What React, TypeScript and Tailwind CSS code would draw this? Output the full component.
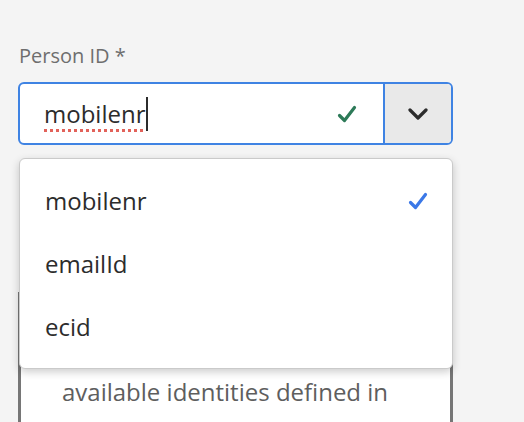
import React from "react";

const font = { fontFamily: '"Open Sans", "Noto Sans", sans-serif' };

const CheckIcon = ({ className }: { className?: string }) => (
  <svg viewBox="0 0 20 18" className={className} fill="none">
    <path d="M2.5 10.5 L7.5 15.5 L17.5 2.5" stroke="currentColor" strokeWidth="3.2" strokeLinecap="round" strokeLinejoin="round" />
  </svg>
);

const ChevronDown = ({ className }: { className?: string }) => (
  <svg viewBox="0 0 20 12" className={className} fill="none">
    <path d="M2 2 L10 10 L18 2" stroke="currentColor" strokeWidth="3.2" strokeLinecap="round" strokeLinejoin="round" />
  </svg>
);

const options = ["mobilenr", "emailId", "ecid"];

export default function App() {
  return (
    <div className="h-[422px] w-full overflow-hidden bg-[#f4f4f4] pl-[18px] pr-[71px]" style={font}>
      {/* label */}
      <div className="pt-[43px] pl-[1px] text-[20px] leading-[26px] text-[#6e6e6e]">Person ID *</div>

      {/* combobox */}
      <div className="relative mt-[13px] z-10">
        <div className="flex h-[63px] rounded-[6px] border-2 border-[#3f83e3] bg-white overflow-hidden">
          <div className="flex flex-1 items-center pl-[24px] pr-[26px]">
            <span className="text-[24px] text-[#2c2c2c] underline decoration-dotted decoration-[#e2625a] decoration-[3px] underline-offset-[6px]">
              mobilenr
            </span>
            <span className="ml-[1px] inline-block h-[34px] w-[2px] bg-[#2c2c2c]" />
            <CheckIcon className="ml-auto h-[18px] w-[20px] text-[#2d7a58]" />
          </div>
          <div className="flex w-[68px] items-center justify-center border-l-2 border-[#3f83e3] bg-[#e9e9e9]">
            <ChevronDown className="h-[12px] w-[20px] text-[#2c2c2c]" />
          </div>
        </div>

        {/* popover */}
        <div className="absolute left-[1px] top-[76px] w-[434px] rounded-[6px] border border-[#cacaca] bg-white py-[10px] shadow-[0_3px_8px_rgba(0,0,0,0.2)]">
          {options.map((o, i) => (
            <div key={o} className="flex h-[63px] items-center pl-[25px] pr-[24px] text-[24px] text-[#2c2c2c]">
              <span>{o}</span>
              {i === 0 && <CheckIcon className="ml-auto h-[18px] w-[20px] text-[#3b78e7]" />}
            </div>
          ))}
        </div>
      </div>

      {/* description box, mostly covered */}
      <div className="mt-[147px] h-[240px] border-x-[3px] border-[#767676] bg-white pl-[41px] text-[24px] leading-[40px] text-[#5e5e5e]">
        <div>Select the identity used as the</div>
        <div>person ID from the list of</div>
        <div>available identities defined in</div>
        <div>the schema of the dataset.</div>
      </div>
    </div>
  );
}
